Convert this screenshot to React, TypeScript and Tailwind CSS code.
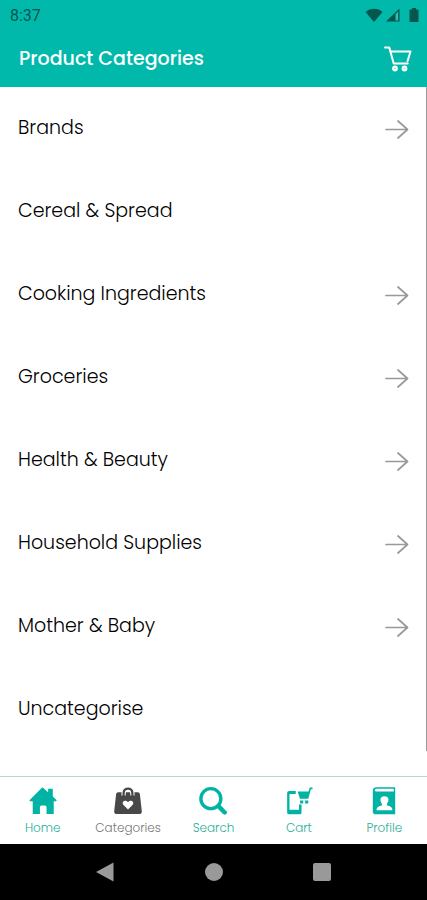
import React from "react";

type Category = { name: string; hasChildren: boolean };

const categories: Category[] = [
  { name: "Brands", hasChildren: true },
  { name: "Cereal & Spread", hasChildren: false },
  { name: "Cooking Ingredients", hasChildren: true },
  { name: "Groceries", hasChildren: true },
  { name: "Health & Beauty", hasChildren: true },
  { name: "Household Supplies", hasChildren: true },
  { name: "Mother & Baby", hasChildren: true },
  { name: "Uncategorise", hasChildren: false },
];

function StatusBar() {
  return (
    <div className="flex h-8 items-center justify-between pr-2 pl-2.5 text-[#04564f]">
      <span className="font-[Roboto,sans-serif] text-base">8:37</span>
      <div className="flex items-center">
        <svg className="h-4 w-[18px]" viewBox="0 0 18 16" fill="currentColor" aria-hidden="true">
          <path d="M9 14 .5 4C3 1.700 5.800.7 9 .7s6 1 8.500 3.300Z" />
        </svg>
        <svg className="ml-0.5 h-4 w-4" viewBox="0 0 16 16" aria-hidden="true">
          <path d="M1 13.500 14.500.5v13Z" fill="currentColor" />
          <path d="M10.500 6 13.200 3.400v9.100h-2.700Z" fill="#2bbfb0" />
        </svg>
        <svg className="ml-2 h-4 w-2.5" viewBox="0 0 10 16" fill="currentColor" aria-hidden="true">
          <path d="M3 0h4v1.500h1.700q.8 0 .8.800v10.900q0 .8-.8.800H1.300q-.8 0-.8-.8V2.300q0-.8.8-.8H3Z" />
        </svg>
      </div>
    </div>
  );
}

function HeaderCart() {
  return (
    <svg className="h-7 w-7" viewBox="0 0 28 28" fill="none" stroke="currentColor" strokeLinecap="round" strokeLinejoin="round" aria-hidden="true">
      <path d="M1 1.500h4.300l4.400 16h14" strokeWidth="2" />
      <path d="M6.500 5.500h20l-3 9.700" strokeWidth="2" />
      <circle cx="11" cy="22.500" r="2" strokeWidth="1.800" fill="#a5e5df" />
      <circle cx="20.500" cy="22.500" r="2" strokeWidth="1.800" fill="#a5e5df" />
    </svg>
  );
}

function RowArrow() {
  return (
    <svg className="h-5 w-6" viewBox="0 0 24 20" fill="none" stroke="#999999" strokeWidth="1.700" strokeLinecap="round" strokeLinejoin="round" aria-hidden="true">
      <path d="M1 10.500h21.500M13 2 22.500 10.500l-9.500 8.500" />
    </svg>
  );
}

const icons = {
  home: (
    <path d="M15 .8 20.500 5.500V1.800h5v8.300L29.500 14q.5 1-.7 1.200H26.500V29h-7.700v-7.500q0-1.800-1.800-1.800h-3.500q-1.800 0-1.800 1.800V29H4V15.200H1.200Q0 15 .8 14L13.800.9Q14.400.3 15 .8Z" />
  ),
  bag: (
    <>
      <path d="M4.500 5.500h21q2 0 2.200 2L29.800 26q.2 3-2.800 3H3q-3 0-2.800-3L2.300 7.500q.2-2 2.200-2Z" />
      <path d="M10.300 9V6.500c0-6.500 9.400-6.500 9.400 0V9" fill="none" stroke="#ffffff" strokeWidth="4.600" />
      <path d="M10.300 9.800V6.500c0-6.500 9.400-6.500 9.400 0v3.300" fill="none" stroke="currentColor" strokeWidth="2.400" />
      <path d="m15 24-4.800-4.700c-2.700-2.700 1.200-6.600 4.800-3 3.600-3.600 7.500.3 4.800 3Z" fill="#ffffff" />
    </>
  ),
  search: (
    <g fill="none" stroke="currentColor">
      <circle cx="12.700" cy="12.500" r="10.700" strokeWidth="3.600" />
      <path d="m20.800 20.500 6.700 6.800" strokeWidth="4.800" strokeLinecap="round" />
    </g>
  ),
  cart: (
    <>
      <path d="M4.300 4.300h7.200v3.200H4.800v17H15v-5.700h2.700v8.500q0 2-2 2H4.300q-2 0-2-2v-21q0-2 2-2Z" />
      <path d="M13.500 4.800h11.700L26.500.5h3V2.400h-1.800l-2.700 10.200H16Z" />
      <path d="M16.200 14.400h3.300v3.300h-3.300zM21.600 14.400h3.300v3.300h-3.300z" />
    </>
  ),
  profile: (
    <>
      <path d="M3 4C3 1.500 4.700.3 7 .3h20V29.300H6Q3 29.300 3 26.300Z" />
      <path d="M7 1.900h18.500v2.900H7q-1.800 0-1.800-1.400T7 1.900Z" fill="#ffffff" />
      <path d="M15.500 10c-5 0-5.300 4.500-2.700 8v1.800c-3.500.7-5.800 1.700-5.800 5h17c0-3.300-2.300-4.300-5.800-5V18c2.600-3.500 2.300-8-2.700-8Z" fill="#ffffff" />
    </>
  ),
};

const tabs: { label: string; icon: keyof typeof icons; active: boolean }[] = [
  { label: "Home", icon: "home", active: false },
  { label: "Categories", icon: "bag", active: true },
  { label: "Search", icon: "search", active: false },
  { label: "Cart", icon: "cart", active: false },
  { label: "Profile", icon: "profile", active: false },
];

export default function App() {
  return (
    <div className="flex min-h-screen flex-col bg-white font-[Poppins,Inter,sans-serif]">
      <header className="bg-[#00b9ab]">
        <StatusBar />
        <div className="flex h-[55px] items-center justify-between pr-[15px] pl-[19px] text-white">
          <h1 className="text-[19px] font-medium">Product Categories</h1>
          <button type="button" aria-label="Open cart">
            <HeaderCart />
          </button>
        </div>
      </header>

      <main className="flex-1">
        <ul className="border-r border-[#999999]">
          {categories.map((category) => (
            <li key={category.name}>
              <button type="button" className="flex h-[83px] w-full items-center justify-between pr-[17px] pl-[18px] text-left text-[19px] font-light text-black">
                {category.name}
                {category.hasChildren && <RowArrow />}
              </button>
            </li>
          ))}
        </ul>
      </main>

      <nav aria-label="Main" className="grid h-[68px] grid-cols-5 border-t border-[#b5d9d1]">
        {tabs.map((tab) => (
          <a
            key={tab.label}
            href="#"
            aria-current={tab.active ? "page" : undefined}
            className={`flex flex-col items-center pt-2.5 ${tab.active ? "text-[#484848]" : "text-[#00b3a5]"}`}
          >
            <svg className="h-7 w-7" viewBox="0 0 30 30" fill="currentColor" aria-hidden="true">
              {icons[tab.icon]}
            </svg>
            <span className={`mt-[5px] text-xs font-light ${tab.active ? "text-[#777777]" : "text-[#2dae97]"}`}>{tab.label}</span>
          </a>
        ))}
      </nav>

      <div className="flex h-14 items-center justify-around bg-black px-[51px] text-[#999999]">
        <button type="button" aria-label="Back">
          <svg className="h-5 w-5" viewBox="0 0 20 20" fill="currentColor" aria-hidden="true">
            <path d="M0 10 17.500.5v19Z" />
          </svg>
        </button>
        <button type="button" aria-label="Home screen" className="h-[18px] w-[18px] rounded-full bg-[#999999]" />
        <button type="button" aria-label="Recent apps" className="h-[18px] w-[18px] rounded-xs bg-[#999999]" />
      </div>
    </div>
  );
}
